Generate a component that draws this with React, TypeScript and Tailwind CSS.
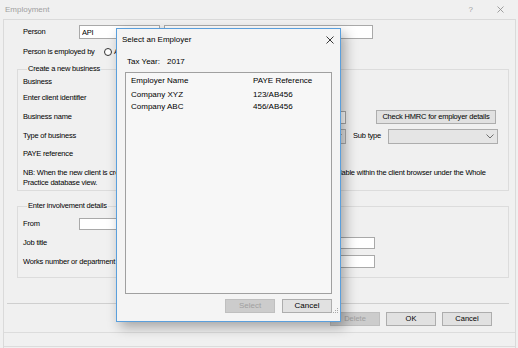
import React from 'react';

const Chevron = () => (
  <svg width="8" height="5" viewBox="0 0 8 5">
    <path d="M0.5 0.5 L4 4 L7.5 0.5" fill="none" stroke="#606060" strokeWidth="0.9" />
  </svg>
);

const SizeGrip = () => (
  <svg width="7" height="7" viewBox="0 0 7 7" fill="#a8a8a8">
    <rect x="5" y="1" width="1" height="1" />
    <rect x="3" y="3" width="1" height="1" />
    <rect x="5" y="3" width="1" height="1" />
    <rect x="1" y="5" width="1" height="1" />
    <rect x="3" y="5" width="1" height="1" />
    <rect x="5" y="5" width="1" height="1" />
  </svg>
);

function TextBox({ w, h = 'h-[12px]', value = '' }: { w: string; h?: string; value?: string }) {
  return (
    <input
      readOnly
      value={value}
      className={`${w} ${h} border border-[#a9a9a9] bg-white pl-[2px] text-black outline-none`}
    />
  );
}

function Combo({ w }: { w: string }) {
  return (
    <div className={`${w} h-[15px] border border-[#adadad] bg-[#e5e5e5] flex items-center justify-end pr-[3px]`}>
      <Chevron />
    </div>
  );
}

function WinButton({ children, disabled, w = 'w-[50px]' }: { children: React.ReactNode; disabled?: boolean; w?: string }) {
  return (
    <button
      disabled={disabled}
      className={`${w} h-[14px] border flex items-center justify-center leading-none ${
        disabled ? 'bg-[#cccccc] border-[#bfbfbf] text-[#a0a0a0]' : 'bg-[#e1e1e1] border-[#adadad] text-black'
      }`}
    >
      {children}
    </button>
  );
}

export default function App() {
  return (
    <div
      className="relative w-[518px] h-[348px] overflow-hidden bg-[#f0f0f0] text-black"
      style={{ fontFamily: '"Liberation Sans", Arial, sans-serif' }}
    >
      {/* Employment window */}
      <div className="flex flex-col h-full text-[7.5px] tracking-[-0.2px]">
        <div className="h-[19px] flex items-center justify-between pl-[5px] pr-[14px] text-[8px] text-[#9f9f9f] tracking-normal">
          <span>Employment</span>
          <div className="flex items-center gap-[24px]">
            <span>?</span>
            <svg width="7" height="7" viewBox="0 0 7 7">
              <path d="M0.5 0.5 L6.5 6.5 M6.5 0.5 L0.5 6.5" stroke="#8a8a8a" strokeWidth="0.8" />
            </svg>
          </div>
        </div>

        <div className="ml-[3px] mr-[2px] flex-1 border-l border-r border-t border-[#dadada] flex flex-col">
          {/* Person */}
          <div className="mt-[5px] pl-[19px] h-[14px] flex items-center">
            <span className="w-[56px]">Person</span>
            <TextBox w="w-[81px]" h="h-[14px]" value="API" />
            <div className="ml-[4px]">
              <TextBox w="w-[209px]" h="h-[14px]" />
            </div>
          </div>

          {/* Employed by */}
          <div className="mt-[6px] pl-[19px] h-[13px] flex items-center">
            <span className="w-[81px]">Person is employed by</span>
            <span className="w-[8px] h-[8px] rounded-full border border-[#333] bg-white" />
            <span className="ml-[2px]">Another client</span>
          </div>

          {/* Create a new business */}
          <fieldset className="mt-[6px] ml-[13px] mr-[6px] border border-[#dcdcdc] pl-[5px] pb-[2px]">
            <legend className="ml-[4px] px-[1px] leading-[10px]">Create a new business</legend>
            <div className="h-[16px] flex items-center">Business</div>
            <div className="h-[16px] flex items-center">Enter client identifier</div>
            <div className="h-[22px] flex items-center">
              <span className="w-[141px]">Business name</span>
              <TextBox w="w-[182px]" h="h-[13px]" />
              <div className="ml-[30px]">
                <WinButton w="w-[120px]">Check HMRC for employer details</WinButton>
              </div>
            </div>
            <div className="h-[16px] flex items-center">
              <span className="w-[141px]">Type of business</span>
              <Combo w="w-[182px]" />
              <span className="ml-[7px] w-[35px]">Sub type</span>
              <Combo w="w-[110px]" />
            </div>
            <div className="h-[20px] flex items-center">PAYE reference</div>
            <div className="mt-[4px] leading-[10px]">
              <div className="flex whitespace-nowrap">
                <span className="w-[317px] overflow-hidden">NB: When the new client is created it will be avai</span>
                <span>lable within the client browser under the Whole</span>
              </div>
              <div>Practice database view.</div>
            </div>
          </fieldset>

          {/* Enter involvement details */}
          <fieldset className="mt-[10px] ml-[13px] mr-[6px] border border-[#dcdcdc] pl-[5px] pt-[3px] pb-[6px]">
            <legend className="ml-[4px] px-[1px] leading-[10px]">Enter involvement details</legend>
            <div className="h-[19px] flex items-center">
              <span className="w-[56px]">From</span>
              <TextBox w="w-[85px]" />
            </div>
            <div className="h-[19px] flex items-center">
              <span className="w-[141px]">Job title</span>
              <TextBox w="w-[211px]" />
            </div>
            <div className="h-[19px] flex items-center">
              <span className="w-[141px]">Works number or department</span>
              <TextBox w="w-[211px]" h="h-[13px]" />
            </div>
          </fieldset>

          <div className="mt-[25px] ml-[3px] mr-[6px] border-t border-[#cfcfcf]" />

          <div className="mt-[8px] pr-[23px] flex justify-end gap-[6px] tracking-normal">
            <WinButton disabled>Delete</WinButton>
            <WinButton w="w-[50px]">OK</WinButton>
            <WinButton>Cancel</WinButton>
          </div>

          <div className="mt-[6px] h-[15px] border-t border-b border-[#dcdcdc]" />
        </div>
      </div>

      {/* Select an Employer dialog */}
      <div className="absolute left-[116px] top-[28px] w-[225px] h-[294px] border border-[#5a9fdc] bg-[#f4f4f4] shadow-[4px_5px_12px_rgba(0,0,0,0.32)] flex flex-col text-[8px]">
        <div className="h-[22px] flex items-center justify-between pl-[5px] pr-[6px]">
          <span>Select an Employer</span>
          <svg width="8" height="8" viewBox="0 0 8 8">
            <path d="M0.5 0.5 L7.5 7.5 M7.5 0.5 L0.5 7.5" stroke="#222" strokeWidth="0.9" />
          </svg>
        </div>

        <div className="mt-[5px] pl-[10px] h-[12px] flex items-center">
          <span className="w-[40px]">Tax Year:</span>
          <span>2017</span>
        </div>

        <div className="mt-[4px] ml-[8px] w-[207px] h-[222px] border border-[#a0a0a0] bg-[#f7f7f7] pl-[5px] pt-[1px]">
          <div className="h-[14px] flex items-center">
            <span className="w-[122px]">Employer Name</span>
            <span>PAYE Reference</span>
          </div>
          <div className="mt-[1px] h-[12px] flex items-center">
            <span className="w-[122px]">Company XYZ</span>
            <span>123/AB456</span>
          </div>
          <div className="h-[12px] flex items-center">
            <span className="w-[122px]">Company ABC</span>
            <span>456/AB456</span>
          </div>
        </div>

        <div className="mt-[5px] pr-[8px] flex justify-end gap-[7px]">
          <WinButton disabled>Select</WinButton>
          <WinButton>Cancel</WinButton>
        </div>

        <div className="absolute right-[1px] bottom-[7px]">
          <SizeGrip />
        </div>
      </div>
    </div>
  );
}
